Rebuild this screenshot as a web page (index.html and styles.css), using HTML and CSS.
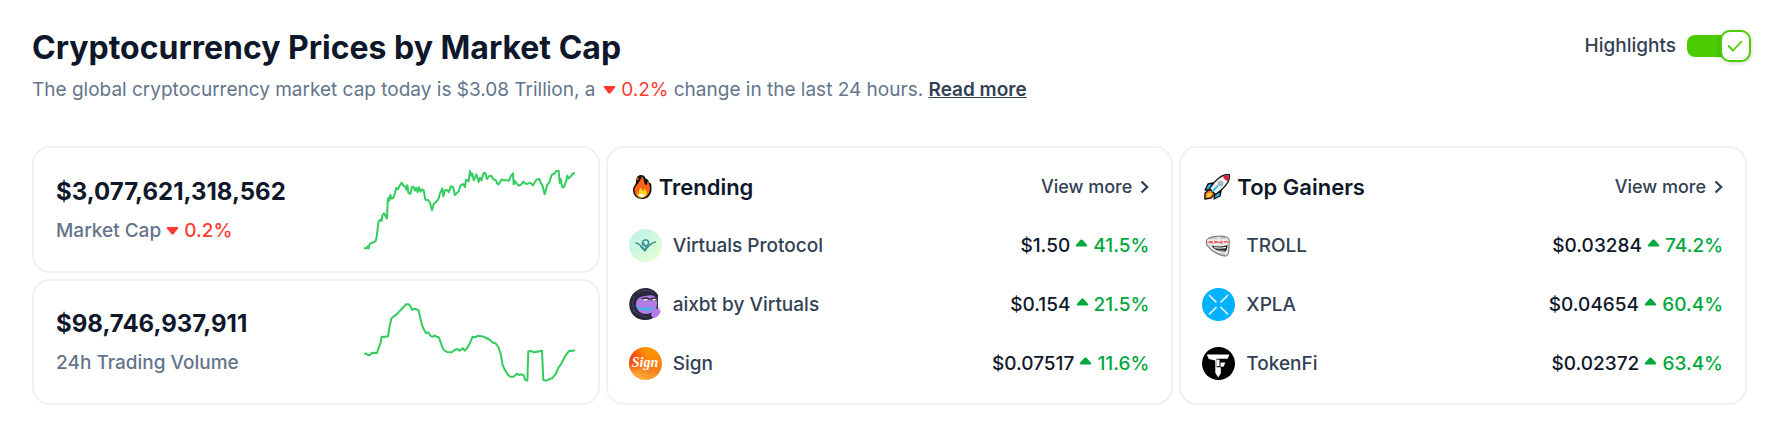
FILE: index.html
```html
<!DOCTYPE html>
<html lang="en">
<head>
<meta charset="utf-8">
<title>Cryptocurrency Prices by Market Cap</title>
<link rel="stylesheet" href="styles.css">
</head>
<body>
<header class="header">
  <div>
    <h1 class="title">Cryptocurrency Prices by Market Cap</h1>
    <p class="subtitle">The global cryptocurrency market cap today is $3.08 Trillion, a <span class="down lead"><svg class="caret" viewBox="0 0 12 8"><path d="M1 0h10q1.500 .5.600 1.600L7 7.200q-1 .8-2 0L.400 1.600Q-.500.500 1 0z"/></svg> 0.2%</span> change in the last 24 hours. <a class="read-more" href="#">Read more</a></p>
  </div>
  <label class="toggle" for="highlights">Highlights
    <span class="switch">
      <input class="switch-input" type="checkbox" id="highlights" checked>
      <svg class="switch-check" viewBox="0 0 16 12"><path d="M1.500 6l4.500 4.500L14.500 1.500"/></svg>
    </span>
  </label>
</header>
<main class="cards">
  <div class="stats">
    <section class="card stat">
      <div>
        <div class="amount">$3,077,621,318,562</div>
        <div class="stat-label">Market Cap <span class="down"><svg class="caret" viewBox="0 0 12 8"><path d="M1 0h10q1.500 .5.600 1.600L7 7.200q-1 .8-2 0L.400 1.600Q-.500.500 1 0z"/></svg> 0.2%</span></div>
      </div>
      <svg class="chart" viewBox="0 0 633 240"><polyline points="0,235 8,235 11,229 14,235 17,222 22,219 28,217 35,213 38,200 42,168 44,154 49,149 53,153 55,136 60,130 65,139 69,145 71,95 73,84 76,92 79,75 83,86 88,84 93,69 97,54 102,58 106,49 113,38 118,47 123,50 127,59 130,46 133,68 139,72 144,51 148,50 153,62 157,53 161,67 165,52 170,65 175,58 179,61 184,89 192,90 198,98 204,121 209,102 216,96 223,88 228,70 235,55 238,79 243,61 249,60 255,66 260,49 267,51 273,75 280,68 284,64 289,47 297,42 303,51 306,29 314,34 318,3 322,17 325,11 329,31 337,13 341,25 344,36 348,23 352,31 359,9 364,9 369,27 376,18 382,17 388,28 396,31 399,40 404,43 413,28 420,31 426,31 435,32 440,19 447,10 449,43 453,33 458,41 465,47 472,43 478,35 484,41 492,41 499,38 507,46 517,29 526,27 531,40 535,45 542,73 550,44 556,37 563,15 571,11 578,2 584,2 587,39 590,27 595,52 600,51 607,31 610,17 614,25 620,20 626,11 633,9"/></svg>
    </section>
    <section class="card stat">
      <div>
        <div class="amount">$98,746,937,911</div>
        <div class="stat-label">24h Trading Volume</div>
      </div>
      <svg class="chart" viewBox="0 0 633 240"><polyline points="0,156 6,154 10,158 17,160 24,152 39,153 44,137 49,125 53,104 60,105 72,103 77,72 82,50 89,43 98,37 106,28 116,18 126,7 134,7 140,14 144,24 150,20 158,22 164,25 168,45 174,69 181,85 186,94 193,91 200,102 208,104 212,100 219,105 224,105 229,118 235,136 240,144 249,150 263,151 272,144 280,141 287,146 297,139 302,146 309,139 317,125 326,104 334,106 342,101 350,103 356,103 367,108 378,114 387,122 394,123 403,135 410,155 416,190 422,202 430,216 438,224 450,224 458,215 466,219 473,217 479,220 484,234 490,236 493,148 500,147 511,151 519,149 534,146 538,234 547,236 557,231 564,229 576,215 583,197 591,187 599,171 607,157 616,146 623,147 633,145"/></svg>
    </section>
  </div>
  <section class="card list">
    <div class="row">
      <h2 class="list-title"><svg class="emoji" viewBox="0 0 26 26"><path d="M12 1c2 0 4 1 4.500 3.500C20 5 20 9 20 9c2-1 2.500 1 2.500 6 0 6-4 10-9 10-6 0-9.500-4-9.500-9 0-4 3-5 3-8C7 3.500 9 1 12 1z" fill="#111"/><path d="M13 2.500c3 3 1 6 4 9 1-1 1.500-3 1.500-4.500 3 5 3 9 1.500 12-2 4-6 4.800-8 4.800-4 0-6.500-3.800-6.500-8 0-4 5-6 7.500-13.300z" fill="#ff6415"/><path d="M12 13c0 2 1 3 2.500 4 .8-.6 1-2 1-2.500 2 2 3 4 2 6.500-1 2-3 2.700-5 2.700-3 0-4.600-2-4.500-5.200C9 20 9.500 20 10 20c-.5-3 .5-5 2-7z" fill="#ffd21f"/><path d="M12.500 19c0 1 1.500 2 3.500 1-.5 2-1.500 3-3.500 3-1.800 0-2.500-1-2.500-2.500 1 0 2-.5 2.500-1.500z" fill="#fff"/><circle cx="8.500" cy="4.800" r="1.200" fill="#ff6415"/></svg>Trending</h2>
      <a class="view-more" href="#">View more <svg class="chevron" viewBox="0 0 9 14"><path d="M1.500 1.500L7.200 7l-5.700 5.500"/></svg></a>
    </div>
    <div class="row">
      <a class="coin" href="#"><svg class="logo" viewBox="0 0 33 33"><defs><linearGradient id="mint" x1="0" y1="0" x2=".8" y2="1"><stop offset="0" stop-color="#b9f0ed"/><stop offset="1" stop-color="#e5ffd2"/></linearGradient></defs><circle cx="16.500" cy="16.500" r="16.500" fill="url(#mint)"/><g fill="none" stroke="#379393" stroke-linecap="round" stroke-linejoin="round"><path d="M7 14c4 .5 5 3 8 6.800" stroke-width="1.300"/><path d="M26.500 13c-4 0-6.500 4-10.300 8.200" stroke-width="1.300"/><path d="M15 16.500c-2-1-2.500-4.500.8-5.500 4-1 5.200 4.200 2 5.500-2 .8-3.500-.2-2.800-1.800" stroke-width="1.700"/><path d="M12 17.500l4 4 2-4.500" stroke-width="2"/></g></svg>Virtuals Protocol</a>
      <span class="quote">$1.50 <span class="up"><svg class="caret" viewBox="0 0 12 8"><path d="M5 .8q1-.8 2 0l4.400 4.900Q12.500 7 11 7.500H1Q-.500 7 .600 5.700z"/></svg> 41.5%</span></span>
    </div>
    <div class="row">
      <a class="coin" href="#"><svg class="logo" viewBox="0 0 33 33"><path d="M29 7C23-3 8-2 2 9-3 19 3 31 15 32c5 .5 9-1 11-4l3-8z" fill="#29283d"/><path d="M5 8c-2 5-2 12 2 17M8 5c4-3 12-4 17 0M4 22c4 4 8 6 14 7" fill="none" stroke="#3d3d55" stroke-width="1.500"/><path d="M7 15c1-5 5-7 10-7 7-2 11 1 11 6 1 7-4 12-11 12-6 0-10-4-10-11z" fill="#b27be6"/><path d="M12 10.500c3-2 6-1.500 9 0 3-1.500 5-1.500 7 0l-1 2c-2 .8-4 .3-6-1-3 1.300-6 1-9-1z" fill="#343044"/><path d="M13.500 11.800c2-1.200 4-1.200 6 0l-3 1zM22.500 11.800c2-1.200 4-1.200 5 0l-2.500 1z" fill="#fff"/><path d="M6 16.500c3 4 12 4.500 19 2.500-1 3-5 4-9 3.500-5-.5-9-2.500-10-6z" fill="#35bfe8"/><path d="M24 23l3-4 1 3 3-3-1 4 2-1c-1 4-3 7-7 8-3-1-4-4-1-7z" fill="#b57be9"/></svg>aixbt by Virtuals</a>
      <span class="quote">$0.154 <span class="up"><svg class="caret" viewBox="0 0 12 8"><path d="M5 .8q1-.8 2 0l4.400 4.900Q12.500 7 11 7.500H1Q-.500 7 .600 5.700z"/></svg> 21.5%</span></span>
    </div>
    <div class="row">
      <a class="coin" href="#"><svg class="logo" viewBox="0 0 33 33"><defs><linearGradient id="sun" x1=".7" y1="0" x2=".4" y2="1"><stop offset="0" stop-color="#ff9800"/><stop offset=".6" stop-color="#f8791a"/><stop offset="1" stop-color="#fbb03c"/></linearGradient><radialGradient id="ember" cx="0" cy=".3" r=".5"><stop offset="0" stop-color="#f5360c"/><stop offset="1" stop-color="#f5360c" stop-opacity="0"/></radialGradient></defs><circle cx="16.500" cy="16.500" r="16.500" fill="url(#sun)"/><circle cx="16.500" cy="16.500" r="16.500" fill="url(#ember)"/><text class="script" x="16" y="20" text-anchor="middle">Sign</text></svg>Sign</a>
      <span class="quote">$0.07517 <span class="up"><svg class="caret" viewBox="0 0 12 8"><path d="M5 .8q1-.8 2 0l4.400 4.900Q12.500 7 11 7.500H1Q-.500 7 .600 5.700z"/></svg> 11.6%</span></span>
    </div>
  </section>
  <section class="card list">
    <div class="row">
      <h2 class="list-title wide"><svg class="emoji" viewBox="0 0 26 26"><g stroke="#111" stroke-width="1.300" stroke-linejoin="round"><path d="M6 15l-5 4-.2 6 6-.8L11 20z" fill="#ff7a1a"/><path d="M9 9l-5 1-3 6 5-.5zM17 17l-1 5-6 3 1-5z" fill="#2fb5ea"/><path d="M25.300.700C19-.500 12 5 5.500 14.500l6 6C21 14 26.500 7 25.300.700z" fill="#e9eef0"/></g><path d="M24.700 1.300c-2-.3-4 .2-5.700 1 .8 2.500 2.500 4 4.700 4.700.8-2 1.200-4 1-5.700z" fill="#dc1c36"/><circle cx="16.500" cy="9.500" r="2.600" fill="#8b9da4"/><circle cx="16.500" cy="9.500" r="1.700" fill="#b9c6ca"/><path d="M8 18l6-6.300" stroke="#2fb5ea" stroke-width="1.800"/><path d="M2.500 23.500l1-4 3-1 1 1-1 3z" fill="#ffd43b"/></svg>Top Gainers</h2>
      <a class="view-more" href="#">View more <svg class="chevron" viewBox="0 0 9 14"><path d="M1.500 1.500L7.200 7l-5.700 5.500"/></svg></a>
    </div>
    <div class="row">
      <a class="coin" href="#"><svg class="logo" viewBox="0 0 33 33"><path d="M4.500 11c2-4 17-5 21-2.500 2.500 2 1.500 4 1.500 8-.2 5 0 10-3 10.500-5 0-9-2-13-5-4.500-3-7.500-6-6.500-11z" fill="#e8e8e8" stroke="#555" stroke-width=".9"/><path d="M9.500 16.500c5 1.500 10 1.500 16-.5 0 3-.8 5.300-2 6.500-6 0-11-1-14-6z" fill="#222"/><path d="M12 17.800c4 .8 8 .8 12 0l-.2 1.400c-4 .6-8 .6-11 0z" fill="#fff"/><path d="M15 21c2.500.6 5 .8 7.500.4" stroke="#ccc" stroke-width=".7"/><path d="M14 17.800v3M17 18v3.500M20 18v4" stroke="#444" stroke-width=".5"/><path d="M9 21c4 3 9 4.700 14 4M7 16c0 4 4 6 8 8M8 10c3-1.500 5-1.500 7-.3M18 9.500c2-.8 4-.8 6 0" fill="none" stroke="#777" stroke-width=".6"/><path d="M4 13.300l5-1.300h5l3 1 3-1h4l4.500 1.300-5 .5-4 .8-3-.8-6 .8z" fill="#f25757"/><circle cx="11.500" cy="13.200" r="1" fill="#fff0f0"/><circle cx="21.500" cy="13.200" r="1" fill="#fff0f0"/></svg>TROLL</a>
      <span class="quote">$0.03284 <span class="up"><svg class="caret" viewBox="0 0 12 8"><path d="M5 .8q1-.8 2 0l4.400 4.900Q12.500 7 11 7.500H1Q-.500 7 .600 5.700z"/></svg> 74.2%</span></span>
    </div>
    <div class="row">
      <a class="coin" href="#"><svg class="logo" viewBox="0 0 33 33"><circle cx="16.500" cy="16.500" r="16.500" fill="#00b1ff"/><path d="M7 7l7.500 7.500M26 7l-7.500 7.500M7 26.500l7.500-7.500M26 26.500L18.500 19" stroke="#e9f8ff" stroke-width="1.700"/></svg>XPLA</a>
      <span class="quote">$0.04654 <span class="up"><svg class="caret" viewBox="0 0 12 8"><path d="M5 .8q1-.8 2 0l4.400 4.900Q12.500 7 11 7.500H1Q-.500 7 .600 5.700z"/></svg> 60.4%</span></span>
    </div>
    <div class="row">
      <a class="coin" href="#"><svg class="logo" viewBox="0 0 33 33"><circle cx="16.500" cy="16.500" r="16.500" fill="#000"/><path d="M4.800 7.500h22.500l-1.600 4.200H14.500v8.600h4.300v5.900l-2.500 4.300-3-4.600V13.500L6.800 12z" fill="#fff"/><path d="M18.500 15.500h4.800l-1.700 4.200h-3.100z" fill="#fff"/><path d="M14.500 12.700h3v6.500h-3z" fill="#fff"/></svg>TokenFi</a>
      <span class="quote">$0.02372 <span class="up"><svg class="caret" viewBox="0 0 12 8"><path d="M5 .8q1-.8 2 0l4.400 4.900Q12.500 7 11 7.500H1Q-.500 7 .600 5.700z"/></svg> 63.4%</span></span>
    </div>
  </section>
</main>
</body>
</html>
```
FILE: styles.css
```css
*,
*::before,
*::after {
  box-sizing: border-box;
}

body {
  margin: 0;
  padding: 28px 40px 24px 32px;
  background: #fff;
  color: #0f172a;
  font-family: Inter, "Liberation Sans", sans-serif;
  font-size: 19px;
  font-weight: 500;
}

a {
  color: inherit;
  text-decoration: none;
}

.header {
  display: flex;
  justify-content: space-between;
  align-items: flex-start;
  margin-bottom: 42px;
}

.title {
  margin: 0 0 8px;
  font-size: 32px;
  line-height: 40px;
  font-weight: 700;
}

.subtitle {
  margin: 0;
  color: #64748b;
  line-height: 28px;
  font-weight: 400;
}

.read-more {
  color: #334155;
  font-weight: 600;
  text-decoration: underline;
}

.down {
  color: #ff3a33;
}

.up {
  color: #00a83e;
}

.lead {
  margin-left: 2px;
}

.caret {
  width: 13px;
  height: 8px;
  fill: currentColor;
  vertical-align: 2px;
}

.up .caret {
  vertical-align: 5px;
}

.toggle {
  display: flex;
  align-items: center;
  gap: 11px;
  margin-top: 2px;
  color: #334155;
  line-height: 32px;
}

.switch {
  position: relative;
  display: block;
  width: 64px;
  height: 32px;
}

.switch-input {
  appearance: none;
  display: block;
  width: 64px;
  height: 32px;
  margin: 0;
}

.switch-input::before {
  content: "";
  position: absolute;
  top: 5px;
  left: 0;
  width: 48px;
  height: 22px;
  border-radius: 8px;
  background: #4bcc00;
}

.switch-input::after {
  content: "";
  position: absolute;
  top: 0;
  right: 0;
  width: 31px;
  height: 32px;
  border: 2px solid #4bcc00;
  border-radius: 10px;
  background: #fff;
  box-shadow: 0 1px 4px rgb(0 0 0 / 20%);
}

.switch-check {
  position: absolute;
  top: 10px;
  right: 8px;
  width: 16px;
  height: 12px;
  fill: none;
  stroke: #4bcc00;
  stroke-width: 1.8;
  stroke-linecap: round;
  stroke-linejoin: round;
}

.cards {
  display: grid;
  grid-template-columns: repeat(3, 1fr);
  gap: 6px;
  margin-right: 4px;
}

.stats {
  display: grid;
  grid-template-rows: 1fr 1fr;
  gap: 6px;
}

.card {
  border: 2px solid #eff2f5;
  border-radius: 18px;
}

.stat {
  display: flex;
  justify-content: space-between;
  align-items: center;
  padding: 1px 23px 0 22px;
}

.amount {
  margin-bottom: 6px;
  font-size: 24px;
  line-height: 36px;
  font-weight: 700;
}

.stat-label {
  color: #64748b;
  line-height: 30px;
}

.chart {
  width: 211px;
  height: 80px;
  fill: none;
  stroke: #32cd5e;
  stroke-width: 6;
  stroke-linejoin: round;
}

.list {
  padding: 9px 22px 10px 21px;
}

.row {
  display: flex;
  justify-content: space-between;
  align-items: center;
  height: 59px;
}

.list-title {
  display: flex;
  align-items: center;
  gap: 4px;
  margin: 0;
  font-size: 22px;
  line-height: 32px;
  font-weight: 600;
}

.list-title.wide {
  gap: 7px;
  padding-left: 2px;
}

.emoji {
  width: 26px;
  height: 26px;
}

.view-more {
  display: flex;
  align-items: center;
  gap: 8px;
  color: #334155;
  font-size: 18px;
}

.chevron {
  width: 9px;
  height: 14px;
  fill: none;
  stroke: #334155;
  stroke-width: 2.3;
}

.coin {
  display: flex;
  align-items: center;
  gap: 11px;
  color: #334155;
}

.logo {
  width: 33px;
  height: 33px;
}

.script {
  fill: #fff;
  font: italic 700 14px "Liberation Serif", serif;
}
```
